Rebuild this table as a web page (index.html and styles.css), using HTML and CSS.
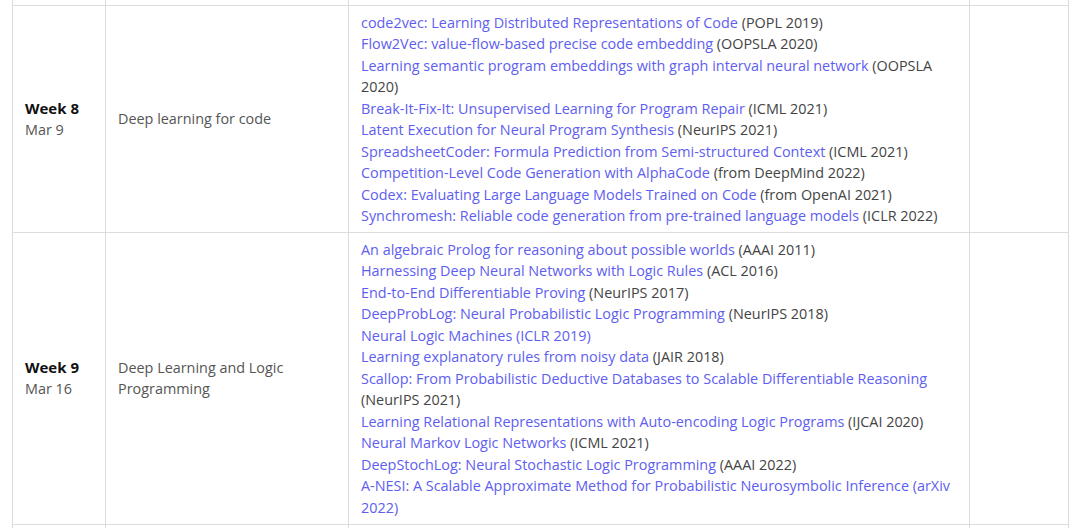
FILE: index.html
```html
<!DOCTYPE html>
<html>
<head>
<meta charset="utf-8">
<link rel="stylesheet" href="styles.css">
</head>
<body>
<div class="wrap">
<table class="sched">
  <colgroup>
    <col class="c-week"><col class="c-topic"><col class="c-read"><col class="c-extra">
  </colgroup>
  <tr class="stub"><td></td><td></td><td></td><td></td></tr>
  <tr>
    <td class="week"><strong>Week 8</strong><span class="date">Mar 9</span></td>
    <td class="topic">Deep learning for code</td>
    <td class="read">
      <div><a href="#">code2vec: Learning Distributed Representations of Code</a> (POPL 2019)</div>
      <div><a href="#">Flow2Vec: value-flow-based precise code embedding</a> (OOPSLA 2020)</div>
      <div><a href="#">Learning semantic program embeddings with graph interval neural network</a> (OOPSLA 2020)</div>
      <div><a href="#">Break-It-Fix-It: Unsupervised Learning for Program Repair</a> (ICML 2021)</div>
      <div><a href="#">Latent Execution for Neural Program Synthesis</a> (NeurIPS 2021)</div>
      <div><a href="#">SpreadsheetCoder: Formula Prediction from Semi-structured Context</a> (ICML 2021)</div>
      <div><a href="#">Competition-Level Code Generation with AlphaCode</a> (from DeepMind 2022)</div>
      <div><a href="#">Codex: Evaluating Large Language Models Trained on Code</a> (from OpenAI 2021)</div>
      <div><a href="#">Synchromesh: Reliable code generation from pre-trained language models</a> (ICLR 2022)</div>
    </td>
    <td></td>
  </tr>
  <tr>
    <td class="week"><strong>Week 9</strong><span class="date">Mar 16</span></td>
    <td class="topic">Deep Learning and Logic Programming</td>
    <td class="read">
      <div><a href="#">An algebraic Prolog for reasoning about possible worlds</a> (AAAI 2011)</div>
      <div><a href="#">Harnessing Deep Neural Networks with Logic Rules</a> (ACL 2016)</div>
      <div><a href="#">End-to-End Differentiable Proving</a> (NeurIPS 2017)</div>
      <div><a href="#">DeepProbLog: Neural Probabilistic Logic Programming</a> (NeurIPS 2018)</div>
      <div><a href="#">Neural Logic Machines (ICLR 2019)</a></div>
      <div><a href="#">Learning explanatory rules from noisy data</a> (JAIR 2018)</div>
      <div><a href="#">Scallop: From Probabilistic Deductive Databases to Scalable Differentiable Reasoning</a> (NeurIPS 2021)</div>
      <div><a href="#">Learning Relational Representations with Auto-encoding Logic Programs</a> (IJCAI 2020)</div>
      <div><a href="#">Neural Markov Logic Networks</a> (ICML 2021)</div>
      <div><a href="#">DeepStochLog: Neural Stochastic Logic Programming</a> (AAAI 2022)</div>
      <div><a href="#">A-NESI: A Scalable Approximate Method for Probabilistic Neurosymbolic Inference (arXiv 2022)</a></div>
    </td>
    <td></td>
  </tr>
  <tr class="stub"><td></td><td></td><td></td><td></td></tr>
</table>
</div>
</body>
</html>
```
FILE: styles.css
```css
html, body {
  margin: 0;
  padding: 0;
  background: #fff;
}
body {
  font-family: "Open Sans", "Noto Sans", sans-serif;
  font-size: 14.4px;
  line-height: 21.5px;
  color: #444;
}
.wrap {
  padding: 0 12px;
}
.sched {
  border-collapse: collapse;
  table-layout: fixed;
  width: 1056px;
}
.c-week { width: 93px; }
.c-topic { width: 243px; }
.c-read { width: 621px; }
.c-extra { width: 99px; }
.sched td {
  border: 1px solid #dcdcdc;
  padding: 5.5px 12px;
  vertical-align: middle;
}
.sched tr.stub td {
  padding: 0;
  border-top: none;
  border-bottom: none;
}
.sched tr.stub:first-child td {
  height: 5px;
}
.sched tr.stub:last-child td {
  height: 20px;
}
.week {
  padding-left: 13px;
}
.week strong {
  display: block;
  color: #111;
  font-weight: 700;
  font-size: 15px;
}
.week .date {
  display: block;
  color: #555;
}
.topic {
  color: #555;
}
.read a {
  color: #5e5ef0;
  text-decoration: none;
}
```
